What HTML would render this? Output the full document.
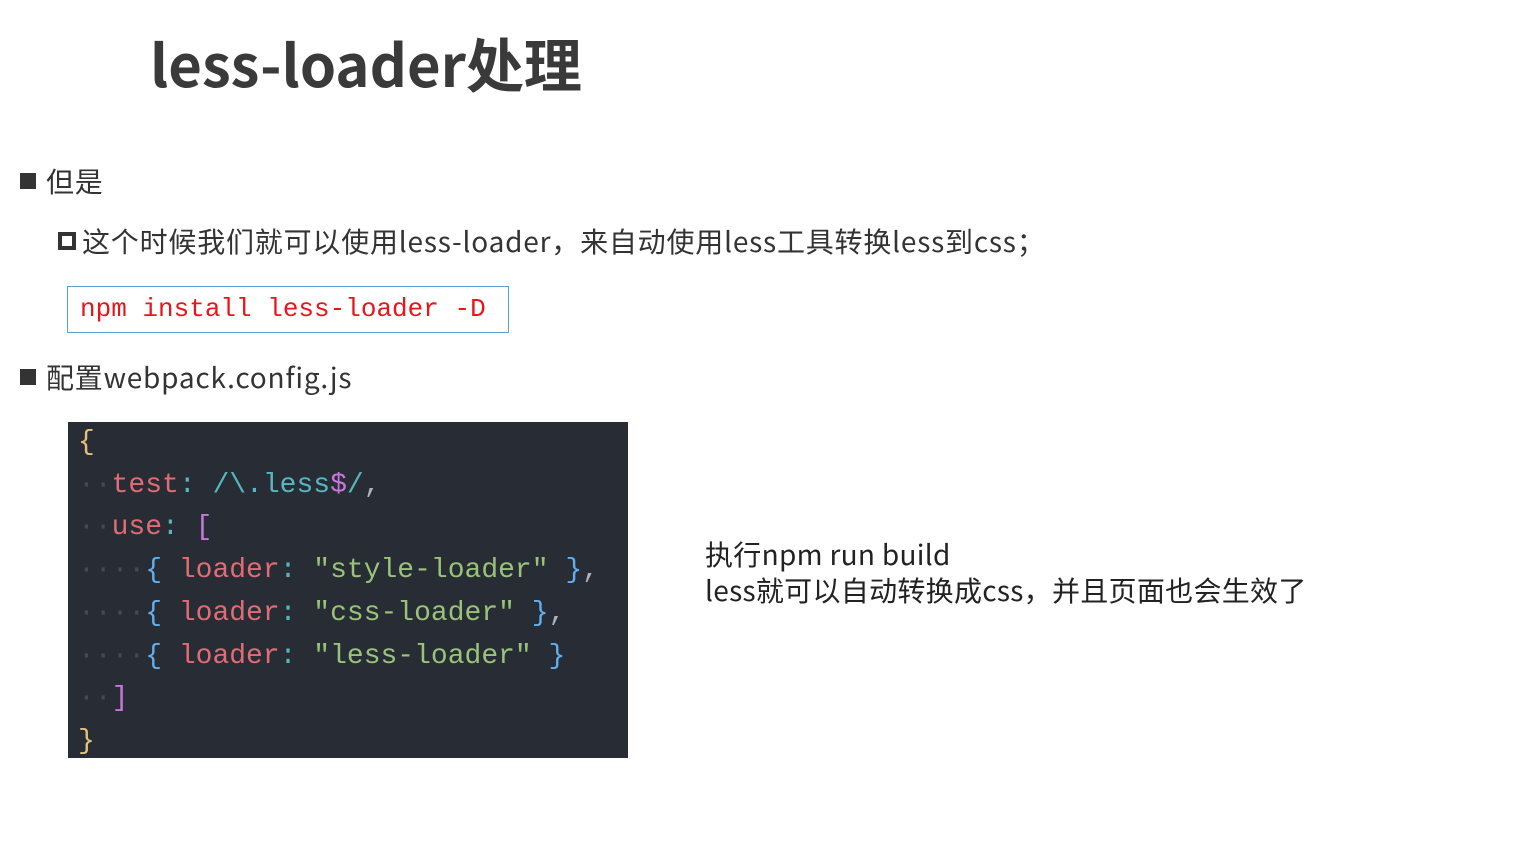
<!DOCTYPE html>
<html><head><meta charset="utf-8"><style>
*{margin:0;padding:0;box-sizing:border-box}
body{width:1521px;height:847px;background:#fff;position:relative;overflow:hidden;font-family:"Noto Sans CJK SC","Liberation Sans",sans-serif;color:#333}
.a{position:absolute;white-space:nowrap}
.title{left:150px;top:20px;font-size:58px;font-weight:700;color:#3a3a3a;letter-spacing:0px;line-height:84px}
.b{font-size:28px;line-height:40px;letter-spacing:0.8px}
.sq{display:inline-block;width:16px;height:16px;background:#333;vertical-align:middle;margin-right:10px;position:relative;top:-3px}
.osq{display:inline-block;width:18px;height:18px;border:4px solid #333;vertical-align:middle;margin-right:6px;position:relative;top:-3px}
.npm{left:67px;top:286px;width:442px;height:47px;border:1px solid #5aa0d8;font-family:"Liberation Mono",monospace;color:#e8161b;font-size:26px;line-height:45px;padding-left:12px}
.code{left:68px;top:422px;width:560px;height:336px;background:#282c34;font-family:"Liberation Mono",monospace;font-size:28px;line-height:42.7px;padding:0 0 0 10px;white-space:pre;color:#abb2bf;overflow:hidden}
.y{color:#e5c07b}.r{color:#e06c75}.c{color:#56b6c2}.g{color:#98c379}.p{color:#c678dd}.bl{color:#61afef}.d{color:#444a55}
.side{left:705px;top:536px;font-size:28px;line-height:36px;color:#222;letter-spacing:0.3px}
</style></head><body>
<div class="a title">less-loader处理</div>
<div class="a b" style="left:20px;top:161px"><span class="sq"></span>但是</div>
<div class="a b" style="left:58px;top:221px"><span class="osq"></span>这个时候我们就可以使用less-loader，来自动使用less工具转换less到css；</div>
<div class="a npm">npm install less-loader -D</div>
<div class="a b" style="left:20px;top:357px;letter-spacing:0.8px"><span class="sq"></span>配置webpack.config.js</div>
<div class="a code"><span class="y">{</span>
<span class="d">··</span><span class="r">test</span><span class="c">:</span> <span class="c">/\.less</span><span class="p">$</span><span class="c">/</span>,
<span class="d">··</span><span class="r">use</span><span class="c">:</span> <span class="p">[</span>
<span class="d">····</span><span class="bl">{</span> <span class="r">loader</span><span class="c">:</span> <span class="g">"style-loader"</span> <span class="bl">}</span>,
<span class="d">····</span><span class="bl">{</span> <span class="r">loader</span><span class="c">:</span> <span class="g">"css-loader"</span> <span class="bl">}</span>,
<span class="d">····</span><span class="bl">{</span> <span class="r">loader</span><span class="c">:</span> <span class="g">"less-loader"</span> <span class="bl">}</span>
<span class="d">··</span><span class="p">]</span>
<span class="y">}</span></div>
<div class="a side">执行npm run build<br>less就可以自动转换成css，并且页面也会生效了</div>
</body></html>
